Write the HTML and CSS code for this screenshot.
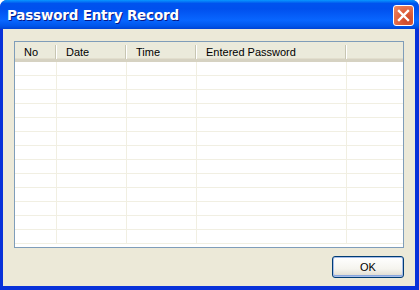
FILE: index.html
```html
<!DOCTYPE html>
<html>
<head>
	<title>Password Entry Record</title>
	<link rel="stylesheet" href="styles.css">
</head>
<body>

	<div class="window">
		<div class="titlebar">
			<span class="title">Password Entry Record</span>
			<button class="close-btn" aria-label="Close">
				<svg width="13" height="13" viewBox="0 0 13 13">
					<path d="M2 2 L11 11 M11 2 L2 11" stroke="#fff" stroke-width="2.4" stroke-linecap="square"/>
				</svg>
			</button>
		</div>

		<div class="body">
			<div class="list">
				<div class="list-header">
					<div class="col col-no">No</div>
					<div class="col col-date">Date</div>
					<div class="col col-time">Time</div>
					<div class="col col-pass">Entered Password</div>
					<div class="col col-rest"></div>
				</div>
				<div class="list-rows">
					<div class="row"><div class="cell col-no"></div><div class="cell col-date"></div><div class="cell col-time"></div><div class="cell col-pass"></div><div class="cell col-rest"></div></div>
					<div class="row"><div class="cell col-no"></div><div class="cell col-date"></div><div class="cell col-time"></div><div class="cell col-pass"></div><div class="cell col-rest"></div></div>
					<div class="row"><div class="cell col-no"></div><div class="cell col-date"></div><div class="cell col-time"></div><div class="cell col-pass"></div><div class="cell col-rest"></div></div>
					<div class="row"><div class="cell col-no"></div><div class="cell col-date"></div><div class="cell col-time"></div><div class="cell col-pass"></div><div class="cell col-rest"></div></div>
					<div class="row"><div class="cell col-no"></div><div class="cell col-date"></div><div class="cell col-time"></div><div class="cell col-pass"></div><div class="cell col-rest"></div></div>
					<div class="row"><div class="cell col-no"></div><div class="cell col-date"></div><div class="cell col-time"></div><div class="cell col-pass"></div><div class="cell col-rest"></div></div>
					<div class="row"><div class="cell col-no"></div><div class="cell col-date"></div><div class="cell col-time"></div><div class="cell col-pass"></div><div class="cell col-rest"></div></div>
					<div class="row"><div class="cell col-no"></div><div class="cell col-date"></div><div class="cell col-time"></div><div class="cell col-pass"></div><div class="cell col-rest"></div></div>
					<div class="row"><div class="cell col-no"></div><div class="cell col-date"></div><div class="cell col-time"></div><div class="cell col-pass"></div><div class="cell col-rest"></div></div>
					<div class="row"><div class="cell col-no"></div><div class="cell col-date"></div><div class="cell col-time"></div><div class="cell col-pass"></div><div class="cell col-rest"></div></div>
					<div class="row"><div class="cell col-no"></div><div class="cell col-date"></div><div class="cell col-time"></div><div class="cell col-pass"></div><div class="cell col-rest"></div></div>
					<div class="row"><div class="cell col-no"></div><div class="cell col-date"></div><div class="cell col-time"></div><div class="cell col-pass"></div><div class="cell col-rest"></div></div>
					<div class="row"><div class="cell col-no"></div><div class="cell col-date"></div><div class="cell col-time"></div><div class="cell col-pass"></div><div class="cell col-rest"></div></div>
				</div>
			</div>

			<div class="buttons">
				<button class="ok-btn">OK</button>
			</div>
		</div>
	</div>

</body>
</html>
```

FILE: styles.css
```css
body {
	margin: 0;
	width: 419px;
	height: 290px;
	overflow: hidden;
	font-family: "Liberation Sans", Arial, sans-serif;
	font-size: 11px;
}

.window {
	width: 419px;
	height: 290px;
	display: flex;
	flex-direction: column;
	background: #0831d9;
	border-radius: 7px 7px 0 0;
	overflow: hidden;
}

.titlebar {
	height: 29px;
	flex: none;
	display: flex;
	align-items: center;
	justify-content: space-between;
	padding: 0 5px 0 7px;
	background: linear-gradient(to bottom, #0997ff 0%, #0053ee 12%, #0050ee 30%, #0866ff 70%, #0055ea 90%, #0042d3 100%);
}

.title {
	color: #fff;
	font-family: "DejaVu Sans", sans-serif;
	font-weight: bold;
	font-size: 13.5px;
	letter-spacing: -0.2px;
	text-shadow: 1px 1px 0 #0a1883;
}

.close-btn {
	width: 21px;
	height: 21px;
	padding: 0;
	display: flex;
	align-items: center;
	justify-content: center;
	border: 1px solid #fff;
	border-radius: 3px;
	background: radial-gradient(circle at 70% 75%, #cc4628 0%, #e0603c 45%, #ee8c68 100%);
	margin-top: 1px;
}

.body {
	flex: 1;
	margin: 0 4px 4px 3px;
	background: #ece9d8;
	padding: 12px 11px 0 11px;
	display: flex;
	flex-direction: column;
}

.list {
	height: 205px;
	border: 1px solid #7f9db9;
	background: #fff;
	display: flex;
	flex-direction: column;
	overflow: hidden;
}

.list-header {
	height: 17px;
	display: flex;
	background: #ebeadb;
	border-bottom: 3px solid #d6d2c2;
	box-shadow: inset 0 -1px 0 #e2decd;
}

.col {
	box-sizing: border-box;
	padding: 4px 0 0 9px;
	position: relative;
	color: #000;
}

.col::after {
	content: "";
	position: absolute;
	right: 1px;
	top: 3px;
	bottom: 0;
	width: 1px;
	background: #c7c5b2;
	box-shadow: 1px 0 0 #fff;
}

.col-rest::after {
	display: none;
}

.col-no { width: 42px; flex: none; }
.col-date { width: 70px; flex: none; }
.col-time { width: 70px; flex: none; }
.col-pass { width: 150px; flex: none; }
.col-rest { flex: 1; }

.list-rows {
	flex: 1;
	overflow: hidden;
}

.row {
	height: 14px;
	display: flex;
	border-bottom: 1px solid #f1efe2;
	box-sizing: border-box;
}

.cell {
	border-right: 1px solid #f1efe2;
	box-sizing: border-box;
	padding: 0;
}

.cell.col-rest {
	border-right: none;
}

.buttons {
	display: flex;
	justify-content: flex-end;
	padding-top: 8px;
}

.ok-btn {
	width: 72px;
	height: 22px;
	font-family: "Liberation Sans", Arial, sans-serif;
	font-size: 11px;
	color: #000;
	border: 1px solid #003c74;
	border-radius: 3px;
	background: linear-gradient(to bottom, #fff 0%, #f5f4ee 60%, #dcd8cc 100%);
	box-shadow: inset 0 0 0 1px #a7bde8, inset 0 -1px 0 1px #89a6dd;
}
```
